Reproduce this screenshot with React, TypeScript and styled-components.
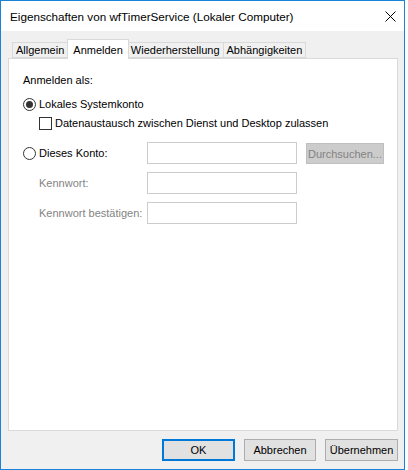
import React, { useState } from 'react';
import styled, { createGlobalStyle } from 'styled-components';

const GlobalStyle = createGlobalStyle`
  html, body {
    margin: 0;
    padding: 0;
    background: #ffffff;
  }
  body {
    font-family: "Liberation Sans", Arial, sans-serif;
    font-size: 11px;
    color: #000;
  }
`;

const Window = styled.div`
  box-sizing: border-box;
  width: 405px;
  height: 470px;
  border: 1px solid #1883d7;
  display: flex;
  flex-direction: column;
`;

const TitleBar = styled.div`
  height: 30px;
  background: #ffffff;
  display: flex;
  align-items: center;
  justify-content: space-between;
  padding: 0 8px 0 9px;
`;

const Title = styled.span`
  font-size: 11.7px;
  padding-top: 1px;
`;

const CloseButton = styled.button`
  border: none;
  background: transparent;
  padding: 0;
  width: 12px;
  height: 12px;
  display: flex;
  align-items: center;
  justify-content: center;
  cursor: pointer;
`;

const Body = styled.div`
  flex: 1;
  background: #f0f0f0;
  display: flex;
  flex-direction: column;
  padding: 8px 6px 0 7px;
`;

const TabStrip = styled.div`
  display: flex;
  align-items: flex-end;
  padding-left: 4px;
`;

const Tab = styled.div<{ $active?: boolean }>`
  position: relative;
  box-sizing: border-box;
  height: ${(p) => (p.$active ? '20px' : '16px')};
  margin: ${(p) => (p.$active ? '0 -1px -1px -1px' : '0')};
  padding: 0 ${(p) => (p.$active ? '5px' : '3px')};
  display: flex;
  align-items: center;
  background: ${(p) => (p.$active ? '#ffffff' : '#f0f0f0')};
  border: 1px solid #d9d9d9;
  border-bottom: ${(p) => (p.$active ? 'none' : '1px solid #d9d9d9')};
  border-left: ${(p) => (p.$active ? '1px solid #d9d9d9' : 'none')};
  z-index: ${(p) => (p.$active ? 1 : 0)};
  cursor: default;

  &:first-child {
    border-left: 1px solid #d9d9d9;
  }
`;

const Panel = styled.div`
  box-sizing: border-box;
  height: 373px;
  background: #ffffff;
  border: 1px solid #d9d9d9;
  padding: 13px 14px 0 14px;
  display: flex;
  flex-direction: column;
`;

const Heading = styled.div`
  line-height: 16px;
`;

const OptionRow = styled.label<{ $indent?: number; $top: number }>`
  display: flex;
  align-items: center;
  height: 16px;
  margin-top: ${(p) => p.$top}px;
  margin-left: ${(p) => p.$indent ?? 0}px;
  cursor: default;
`;

const RadioCircle = styled.span<{ $checked?: boolean }>`
  box-sizing: border-box;
  width: 13px;
  height: 13px;
  border-radius: 50%;
  border: 1px solid #333333;
  background: #ffffff;
  margin-right: 3px;
  display: flex;
  align-items: center;
  justify-content: center;
  flex-shrink: 0;

  &::after {
    content: '';
    width: 7px;
    height: 7px;
    border-radius: 50%;
    background: #333333;
    display: ${(p) => (p.$checked ? 'block' : 'none')};
  }
`;

const CheckBox = styled.span`
  box-sizing: border-box;
  width: 13px;
  height: 13px;
  border: 1px solid #333333;
  background: #ffffff;
  margin-right: 3px;
  flex-shrink: 0;
`;

const AccountGrid = styled.div`
  display: grid;
  grid-template-columns: 115px 150px 78px;
  grid-auto-rows: 22px;
  column-gap: 9px;
  row-gap: 8px;
  margin-top: 11px;
  align-items: center;
`;

const FieldLabel = styled.div<{ $disabled?: boolean }>`
  display: flex;
  align-items: center;
  white-space: nowrap;
  color: ${(p) => (p.$disabled ? '#838383' : '#000000')};
  padding-left: ${(p) => (p.$disabled ? '16px' : '0')};
`;

const TextBox = styled.input`
  box-sizing: border-box;
  width: 150px;
  height: 22px;
  border: 1px solid #cccccc;
  background: #ffffff;
  margin: 0;
  padding: 0 3px;
  font: inherit;
`;

const BrowseButton = styled.button`
  box-sizing: border-box;
  width: 78px;
  height: 21px;
  align-self: start;
  margin-top: 1px;
  border: 1px solid #bfbfbf;
  background: #cccccc;
  color: #838383;
  font: inherit;
  padding: 0;
`;

const ButtonBar = styled.div`
  display: flex;
  justify-content: flex-end;
  gap: 9px;
  margin-top: 8px;
`;

const DialogButton = styled.button<{ $default?: boolean; $width: number }>`
  box-sizing: border-box;
  width: ${(p) => p.$width}px;
  height: 22px;
  border: ${(p) => (p.$default ? '2px solid #0078d7' : '1px solid #adadad')};
  background: #e1e1e1;
  font: inherit;
  color: #000;
  padding: 0;
`;

const tabs = ['Allgemein', 'Anmelden', 'Wiederherstellung', 'Abhängigkeiten'];

export default function App() {
  const [activeTab, setActiveTab] = useState('Anmelden');
  const [useLocal, setUseLocal] = useState(true);
  const [allowDesktop, setAllowDesktop] = useState(false);

  return (
    <>
      <GlobalStyle />
      <Window>
        <TitleBar>
          <Title>Eigenschaften von wfTimerService (Lokaler Computer)</Title>
          <CloseButton aria-label="Schließen">
            <svg width="11" height="11" viewBox="0 0 11 11">
              <path d="M0.5 0.5 L10.5 10.5 M10.5 0.5 L0.5 10.5" stroke="#000" strokeWidth="1" />
            </svg>
          </CloseButton>
        </TitleBar>
        <Body>
          <TabStrip>
            {tabs.map((t) => (
              <Tab key={t} $active={t === activeTab} onClick={() => setActiveTab(t)}>
                {t}
              </Tab>
            ))}
          </TabStrip>
          <Panel>
            <Heading>Anmelden als:</Heading>
            <OptionRow $top={8} onClick={() => setUseLocal(true)}>
              <RadioCircle $checked={useLocal} />
              Lokales Systemkonto
            </OptionRow>
            <OptionRow $top={3} $indent={16} onClick={() => setAllowDesktop(!allowDesktop)}>
              <CheckBox />
              Datenaustausch zwischen Dienst und Desktop zulassen
            </OptionRow>
            <AccountGrid>
              <FieldLabel onClick={() => setUseLocal(false)}>
                <RadioCircle $checked={!useLocal} />
                Dieses Konto:
              </FieldLabel>
              <TextBox disabled />
              <BrowseButton disabled>Durchsuchen...</BrowseButton>
              <FieldLabel $disabled>Kennwort:</FieldLabel>
              <TextBox type="password" disabled />
              <span />
              <FieldLabel $disabled>Kennwort bestätigen:</FieldLabel>
              <TextBox type="password" disabled />
            </AccountGrid>
          </Panel>
          <ButtonBar>
            <DialogButton $default $width={73}>OK</DialogButton>
            <DialogButton $width={72}>Abbrechen</DialogButton>
            <DialogButton $width={73}>Übernehmen</DialogButton>
          </ButtonBar>
        </Body>
      </Window>
    </>
  );
}
